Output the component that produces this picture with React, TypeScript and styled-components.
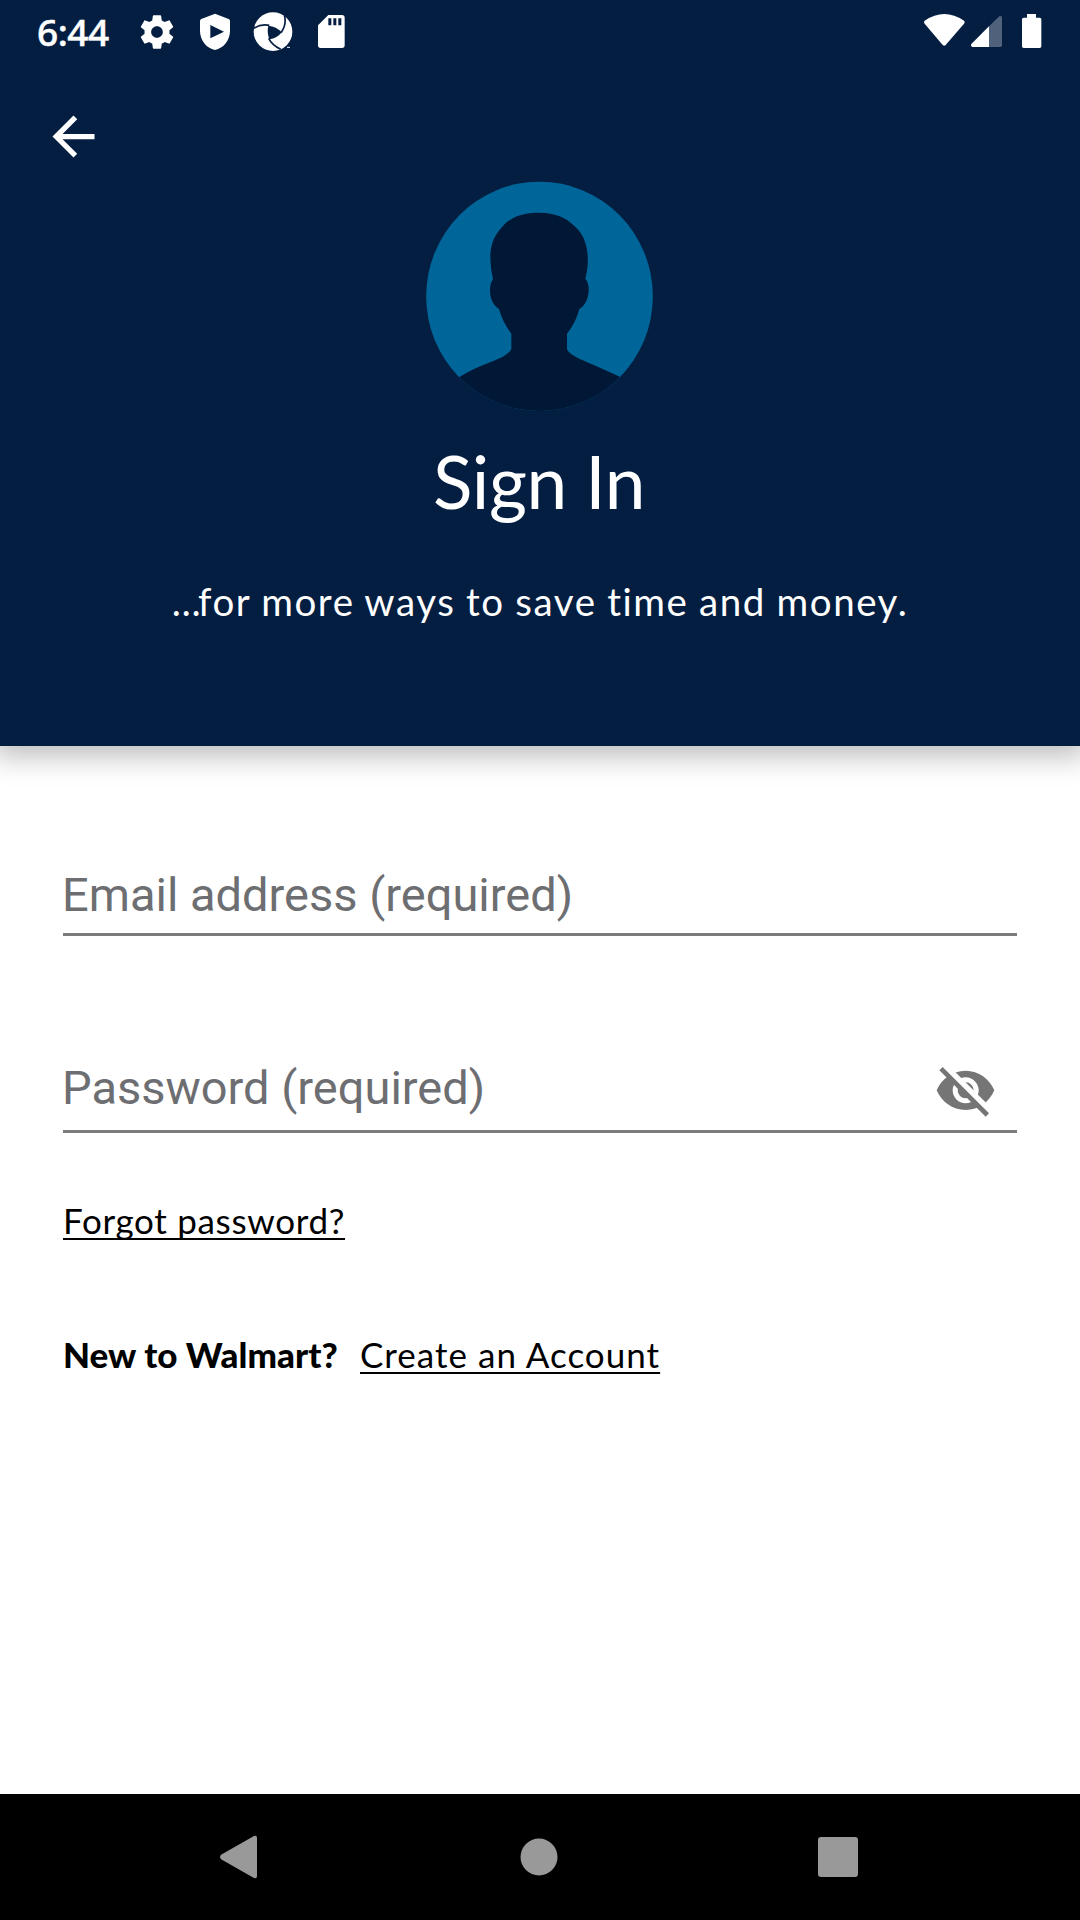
import React from "react";
import styled, { createGlobalStyle } from "styled-components";

const GlobalStyle = createGlobalStyle`
  * { box-sizing: border-box; }
  html, body { margin: 0; padding: 0; background: #fff; }
`;

const navy = "#041e42";
const brandFont = `Lato, "Liberation Sans", sans-serif`;

const Screen = styled.div`
  width: 1080px;
  height: 1920px;
  display: flex;
  flex-direction: column;
  overflow: hidden;
  background: #fff;
`;

const Header = styled.header`
  position: relative;
  z-index: 1;
  height: 746px;
  flex: none;
  display: flex;
  flex-direction: column;
  background: ${navy};
  color: #fff;
  box-shadow: 0 5px 26px 6px rgba(0, 0, 0, 0.25);
`;

const StatusBar = styled.div`
  height: 63px;
  flex: none;
  display: flex;
  justify-content: space-between;
  padding: 0 37px 0 37px;
`;

const StatusGroup = styled.div`
  display: flex;
  align-items: flex-start;
`;

const Clock = styled.span`
  width: 100px;
  padding-top: 7px;
  font: 500 37px/50px "Noto Sans", "Open Sans", sans-serif;
  letter-spacing: -0.5px;
  -webkit-text-stroke: 0.5px #fff;
`;

const Glyph = styled.svg<{ $top: number; $left?: number }>`
  display: block;
  flex: none;
  margin-top: ${(p) => p.$top}px;
  margin-left: ${(p) => p.$left ?? 0}px;
`;

const Toolbar = styled.div`
  height: 118px;
  flex: none;
  padding: 42px 0 0 42px;
`;

const BackButton = styled.button`
  display: block;
  width: 63px;
  height: 63px;
  padding: 0;
  border: 0;
  background: none;
  color: inherit;
`;

const Hero = styled.div`
  display: flex;
  flex-direction: column;
  align-items: center;
`;

const Avatar = styled.svg`
  display: block;
  width: 228px;
  height: 230px;
`;

const Title = styled.h1`
  margin: 27px 2px 0 0;
  font: 400 73px/86px ${brandFont};
  letter-spacing: -0.4px;
  white-space: nowrap;
`;

const Tagline = styled.p`
  margin: 53px 0 0;
  font: 400 38.5px/48px ${brandFont};
  letter-spacing: 1.58px;
  word-spacing: -0.9px;
  white-space: nowrap;
`;

const Ellipsis = styled.span`
  letter-spacing: -2.5px;
`;

const Form = styled.main`
  flex: 1;
  display: flex;
  flex-direction: column;
  align-items: flex-start;
  padding: 113px 63px 0;
`;

const Field = styled.div<{ $height: number; $gap: number }>`
  width: 954px;
  height: ${(p) => p.$height}px;
  margin-bottom: ${(p) => p.$gap}px;
  display: flex;
  justify-content: space-between;
  padding-right: 20px;
  border-bottom: 3px solid #7b7b7b;
`;

const Label = styled.label<{ $top: number }>`
  margin: ${(p) => p.$top}px 0 0 -1px;
  font: 400 47px/56px Roboto, sans-serif;
  color: #6d6e71;
  white-space: nowrap;
`;

const Link = styled.a<{ $spacing: number }>`
  font: 400 35px/42px ${brandFont};
  letter-spacing: ${(p) => p.$spacing}px;
  color: #000;
  white-space: nowrap;
  text-decoration: underline;
  text-decoration-thickness: 2px;
  text-decoration-skip-ink: none;
  text-underline-offset: 4px;
`;

const SignUpRow = styled.div`
  display: flex;
  margin-top: 92px;
`;

const Prompt = styled.strong`
  width: 297px;
  font: 900 35px/42px ${brandFont};
  letter-spacing: 0.05px;
  white-space: nowrap;
`;

const NavBar = styled.nav`
  height: 126px;
  flex: none;
  display: flex;
  align-items: center;
  justify-content: space-between;
  padding: 0 221px 0 218px;
  background: #000;
  color: #999;
`;

const HomeIcon = styled.svg`
  margin-left: 3px;
`;

const App = () => (
  <>
    <GlobalStyle />
    <Screen>
      <Header>
        <StatusBar>
          <StatusGroup>
            <Clock>6:44</Clock>
            <Glyph $top={11.5} width="40" height="40" viewBox="0 0 24 24" fill="#fff">
              <path d="M19.43 12.98c.04-.32.07-.64.07-.98s-.03-.66-.07-.98l2.11-1.65c.19-.15.24-.42.12-.64l-2-3.46c-.12-.22-.39-.3-.61-.22l-2.49 1c-.52-.4-1.08-.73-1.69-.98l-.38-2.65C14.46 2.18 14.25 2 14 2h-4c-.25 0-.46.18-.49.42l-.38 2.65c-.61.25-1.17.59-1.69.98l-2.49-1c-.23-.09-.49 0-.61.22l-2 3.46c-.13.22-.07.49.12.64l2.11 1.65c-.04.32-.07.65-.07.98s.03.66.07.98l-2.11 1.65c-.19.15-.24.42-.12.64l2 3.46c.12.22.39.3.61.22l2.49-1c.52.4 1.08.73 1.69.98l.38 2.65c.03.24.24.42.49.42h4c.25 0 .46-.18.49-.42l.38-2.65c.61-.25 1.17-.59 1.69-.98l2.49 1c.23.09.49 0 .61-.22l2-3.46c.12-.22.07-.49-.12-.64l-2.11-1.65zM12 15.5c-1.93 0-3.5-1.57-3.5-3.5s1.57-3.5 3.5-3.5 3.5 1.57 3.5 3.5-1.57 3.5-3.5 3.5z" />
            </Glyph>
            <Glyph $top={13} $left={23} width="30" height="37" viewBox="600 39 90 111" fill="#fff">
              <path
                fillRule="evenodd"
                d="M645 41 L686 57 Q690 59 690 63 V93 C690 120 671 145 645 150 C619 145 600 120 600 93 V63 Q600 59 604 57 Z M631 75 V115 L672 95 Z"
              />
            </Glyph>
            <Glyph $top={11} $left={22} width="42" height="42" viewBox="756 33 126 126">
              <circle cx="819" cy="95" r="58" fill="#fff" />
              <path d="M805 77 Q829 79 845 97 Q832 115 808 118 Q800 96 805 77 Z" fill={navy} />
              <path
                d="M758 87 Q782 70 808 76 M853 46 Q861 72 843 98 M806 115 Q815 134 842 148"
                fill="none"
                stroke={navy}
                strokeWidth="5"
              />
              <path d="M858 139 h14 v8 h-14 z" fill={navy} />
              <path d="M861 142 h9" stroke="#fff" strokeWidth="3" />
            </Glyph>
            <Glyph $top={15} $left={23} width="32" height="33" viewBox="950 45 96 99" fill="#fff">
              <path
                fillRule="evenodd"
                d="M984 45 H1025 Q1033 45 1033 53 V136 Q1033 144 1025 144 H961 Q953 144 953 136 V76 Z M984 55 V76 H993 V55 Z M999 55 V76 H1008 V55 Z M1014 55 V76 H1023 V55 Z"
              />
            </Glyph>
          </StatusGroup>
          <StatusGroup>
            <Glyph $top={14} width="41" height="32" viewBox="73 42 123 96" fill="#fff">
              <path d="M75 62 Q134 22 193 62 Q197 66 193 71 L138 135 Q134 139 129 135 L75 71 Q71 66 75 62 Z" />
            </Glyph>
            <Glyph $top={15} $left={6} width="31" height="32" viewBox="213 45 93 96" fill="#fff">
              <path d="M267 79 V141 H217 Q211 139 214 132 Z" />
              <path d="M267 79 L298 49 Q306 46 306 53 V136 Q306 141 301 141 H267 Z" opacity=".3" />
            </Glyph>
            <Glyph $top={14} $left={19} width="22" height="34" viewBox="363 42 66 102" fill="#fff">
              <path d="M381 42 H408 V53 H419 Q424 53 424 58 V139 Q424 144 419 144 H371 Q366 144 366 139 V58 Q366 53 371 53 H381 Z" />
            </Glyph>
          </StatusGroup>
        </StatusBar>

        <Toolbar>
          <BackButton aria-label="Back">
            <svg width="63" height="63" viewBox="0 0 24 24" fill="currentColor">
              <path d="M20 11H7.83l5.59-5.59L12 4l-8 8 8 8 1.41-1.41L7.83 13H20v-2z" />
            </svg>
          </BackButton>
        </Toolbar>

        <Hero>
          <Avatar viewBox="48 32 684 690">
            <clipPath id="disc">
              <ellipse cx="388.5" cy="378" rx="340" ry="344" />
            </clipPath>
            <g clipPath="url(#disc)">
              <rect x="40" y="30" width="700" height="700" fill="#006699" />
              <path
                fill="#001836"
                d="M388 127 C440 127 478 146 506 180 C530 210 535 247 533 285 Q531 307 526 325 C534 336 537 345 536 363 C534 387 525 407 508 416 Q498 456 471 490 V536 C477 552 505 564 530 575 C563 589 596 604 631 620 V740 H148 V620 C175 603 205 590 235 578 C268 566 296 553 304 536 V490 Q278 456 267 416 C250 405 240 387 240 360 Q239 340 249 325 C244 303 241 283 241 255 C242 215 258 188 282 163 C310 136 344 127 388 127 Z"
              />
            </g>
          </Avatar>
          <Title>Sign In</Title>
          <Tagline>
            <Ellipsis>…</Ellipsis>for more ways to save time and money.
          </Tagline>
        </Hero>
      </Header>

      <Form>
        <Field $height={77} $gap={117}>
          <Label $top={8}>Email address (required)</Label>
        </Field>
        <Field $height={80} $gap={66}>
          <Label $top={7}>Password (required)</Label>
          <Glyph $top={13} width="63" height="60" viewBox="102 108 189 180" fill="#757575">
            <mask id="slash-gap">
              <rect x="100" y="90" width="200" height="200" fill="#fff" />
              <path d="M119 92 L281 254" stroke="#000" strokeWidth="18" />
            </mask>
            <path
              mask="url(#slash-gap)"
              fillRule="evenodd"
              d="M197 122 C157 122 124 147 110 181 C124 215 157 240 197 240 C236 240 269 215 283 181 C269 147 236 122 197 122 Z M197 220 A39 39 0 1 1 197 142 A39 39 0 1 1 197 220 Z M197 157 A24 24 0 1 0 197 205 A24 24 0 1 0 197 157 Z"
            />
            <path d="M123 116 L262 255" stroke="#757575" strokeWidth="14" />
          </Glyph>
        </Field>
        <Link $spacing={0.68}>Forgot password?</Link>
        <SignUpRow>
          <Prompt>New to Walmart?</Prompt>
          <Link $spacing={1.02}>Create an Account</Link>
        </SignUpRow>
      </Form>

      <NavBar>
        <svg width="40" height="44" viewBox="0 0 40 44" fill="currentColor">
          <path d="M35.5 1.2 Q39 -.5 39 3 V41 Q39 44.5 35.5 42.8 L3.5 24.5 Q.5 22 3.5 19.5 Z" />
        </svg>
        <HomeIcon width="38" height="38" viewBox="0 0 38 38" fill="currentColor">
          <circle cx="19" cy="19" r="18.5" />
        </HomeIcon>
        <svg width="42" height="42" viewBox="0 0 42 42" fill="currentColor">
          <rect x="1" y="1" width="40" height="40" rx="3" />
        </svg>
      </NavBar>
    </Screen>
  </>
);

export default App;
